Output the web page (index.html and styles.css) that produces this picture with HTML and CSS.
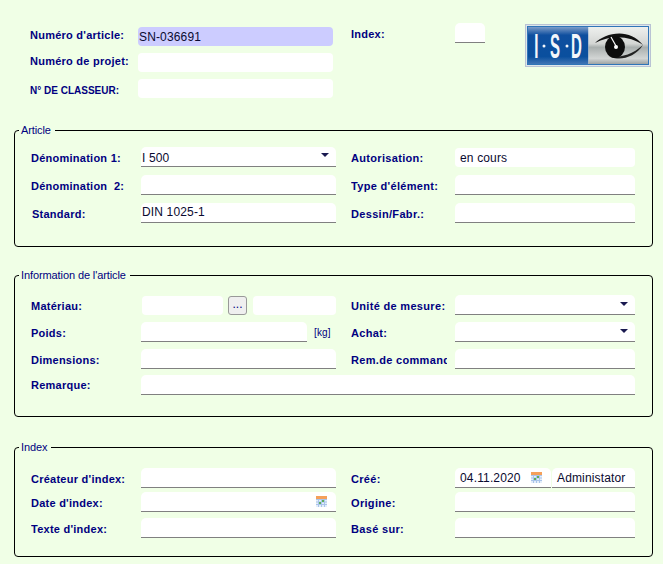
FILE: index.html
```html
<!DOCTYPE html>
<html lang="fr">
<head>
<meta charset="utf-8">
<title>Article</title>
<link rel="stylesheet" href="styles.css">
</head>
<body>
<div class="page">
  <header class="head">
    <div class="head-main">
      <div class="head-row"><span class="label label-top">Numéro d'article:</span><span class="field field-top field-key">SN-036691</span></div>
      <div class="head-row"><span class="label label-top">Numéro de projet:</span><span class="field field-top"></span></div>
      <div class="head-row"><span class="label label-caps">N° DE CLASSEUR:</span><span class="field field-top"></span></div>
    </div>
    <div class="head-index">
      <span class="label label-index">Index:</span>
      <span class="field field-index"></span>
    </div>
    <svg class="logo" width="126" height="43" viewBox="0 0 126 43">
      <defs>
        <linearGradient id="blue" x1="0" y1="0" x2="0" y2="1">
          <stop offset="0" stop-color="#7d9cc8"/><stop offset=".22" stop-color="#0f4f9f"/><stop offset=".8" stop-color="#0a4f9e"/><stop offset="1" stop-color="#3f74b4"/>
        </linearGradient>
        <linearGradient id="grey" x1="0" y1="0" x2="0" y2="1">
          <stop offset="0" stop-color="#eef0ee"/><stop offset=".45" stop-color="#d4d6d4"/><stop offset=".55" stop-color="#a9afae"/><stop offset=".85" stop-color="#d2d5d4"/><stop offset="1" stop-color="#9da3a3"/>
        </linearGradient>
      </defs>
      <rect x=".5" y=".5" width="125" height="42" fill="#dfe6ea" stroke="#b9c3d4"/>
      <rect x="2.500" y="2.500" width="121" height="38" fill="#fff" stroke="#2f75b8"/>
      <rect x="3" y="3" width="60.500" height="37" fill="url(#blue)"/>
      <rect x="63.500" y="3" width="59.500" height="37" fill="url(#grey)"/>
      <g transform="scale(.43 1)">
        <text class="logo-text" x="26.700" y="34">I</text>
        <text class="logo-text" x="69.800" y="34">S</text>
        <text class="logo-text" x="119.800" y="34">D</text>
      </g>
      <circle cx="19" cy="22" r="1.500" fill="#f4f6fa"/>
      <circle cx="42" cy="22" r="1.500" fill="#f4f6fa"/>
      <path d="M70 19 C80 9 104 3 118 21 C106 12 86 10 70 19Z" fill="#111"/>
      <path d="M86 33 C96 37 110 33 118 21 C108 30 98 33 86 33Z" fill="#222"/>
      <ellipse cx="90" cy="23" rx="10" ry="11" fill="#0d0d0d"/>
      <path d="M86 13 L91 22" stroke="#fff" stroke-width="1.200"/>
      <circle cx="91" cy="23" r="2" fill="#fff"/>
    </svg>
  </header>

  <fieldset class="group group-article">
    <legend class="legend">Article</legend>
    <div class="row">
      <span class="label">Dénomination 1:</span>
      <span class="field field-left field-line field-low">I 500<i class="arrow"></i></span>
      <span class="label label-right">Autorisation:</span>
      <span class="field field-right field-low">en cours</span>
    </div>
    <div class="row">
      <span class="label">Dénomination&nbsp; 2:</span>
      <span class="field field-left field-line"></span>
      <span class="label label-right">Type d'élément:</span>
      <span class="field field-right field-line"></span>
    </div>
    <div class="row">
      <span class="label label-indent">Standard:</span>
      <span class="field field-left field-line field-high">DIN 1025-1</span>
      <span class="label label-right">Dessin/Fabr.:</span>
      <span class="field field-right field-line"></span>
    </div>
  </fieldset>

  <fieldset class="group group-info">
    <legend class="legend">Information de l'article</legend>
    <div class="row row-tight">
      <span class="label">Matériau:</span>
      <span class="left-set">
        <span class="field field-mat"></span>
        <button class="dots" type="button">...</button>
        <span class="field field-mat2"></span>
      </span>
      <span class="label label-right">Unité de mesure:</span>
      <span class="field field-right field-line"><i class="arrow arrow-low"></i></span>
    </div>
    <div class="row row-tight">
      <span class="label">Poids:</span>
      <span class="left-set">
        <span class="field field-weight field-line"></span>
        <span class="unit">[kg]</span>
      </span>
      <span class="label label-right">Achat:</span>
      <span class="field field-right field-line"><i class="arrow arrow-low"></i></span>
    </div>
    <div class="row row-close">
      <span class="label">Dimensions:</span>
      <span class="field field-left field-line"></span>
      <span class="label label-right">Rem.de commande:</span>
      <span class="field field-right field-line"></span>
    </div>
    <div class="row row-tight">
      <span class="label label-flush">Remarque:</span>
      <span class="field field-wide field-line"></span>
    </div>
  </fieldset>

  <fieldset class="group group-index">
    <legend class="legend">Index</legend>
    <div class="row row-first">
      <span class="label">Créateur d'index:</span>
      <span class="field field-left field-line"></span>
      <span class="label label-right">Créé:</span>
      <span class="right-set">
        <span class="field field-date field-line">04.11.2020
          <svg class="cal" width="11" height="11" viewBox="0 0 11 11"><rect width="11" height="11" fill="#e4eefa"/><rect width="11" height="3" fill="#f5a05a"/><path d="M0 3.500h11M0 6h11M0 8.500h11M2.500 3v8M5.500 3v8M8.500 3v8" stroke="#a9c4ea" stroke-width="1" fill="none"/><path d="M3 6h2v2H3z" fill="#5fae5a"/><path d="M6 4h2v2H6z" fill="#5fae5a"/></svg>
        </span>
        <span class="field field-user field-line">Administator</span>
      </span>
    </div>
    <div class="row row-index">
      <span class="label">Date d'index:</span>
      <span class="field field-left field-line">
        <svg class="cal" width="11" height="11" viewBox="0 0 11 11"><rect width="11" height="11" fill="#e4eefa"/><rect width="11" height="3" fill="#f5a05a"/><path d="M0 3.500h11M0 6h11M0 8.500h11M2.500 3v8M5.500 3v8M8.500 3v8" stroke="#a9c4ea" stroke-width="1" fill="none"/><path d="M3 6h2v2H3z" fill="#5fae5a"/><path d="M6 4h2v2H6z" fill="#5fae5a"/></svg>
      </span>
      <span class="label label-right">Origine:</span>
      <span class="field field-right field-line"></span>
    </div>
    <div class="row row-index">
      <span class="label">Texte d'index:</span>
      <span class="field field-left field-line"></span>
      <span class="label label-right">Basé sur:</span>
      <span class="field field-right field-line"></span>
    </div>
  </fieldset>
</div>
</body>
</html>
```
FILE: styles.css
```css
html, body {
  margin: 0;
  padding: 0;
  height: 564px;
  overflow: hidden;
  background: #f0ffe6;
}
.page {
  font-family: "Liberation Sans", Arial, sans-serif;
  font-size: 12px;
  letter-spacing: .15px;
  color: #0a0a30;
  padding: 0 10px 0 14px;
}
.head {
  display: flex;
  align-items: flex-start;
  height: 124px;
  padding-left: 16px;
  padding-top: 23px;
  box-sizing: border-box;
}
.head-main {
  display: flex;
  flex-direction: column;
  gap: 7px;
  width: 303px;
  padding-top: 4px;
}
.head-row {
  display: flex;
  align-items: center;
  height: 19px;
}
.label {
  flex: none;
  width: 110px;
  margin-top: 2px;
  font-size: 11px;
  font-weight: bold;
  letter-spacing: .25px;
  color: #000080;
  white-space: nowrap;
  overflow: hidden;
}
.label-top {
  width: 108px;
  margin-top: -4px;
}
.label-caps {
  width: 108px;
  margin-top: 4px;
  font-size: 10px;
  letter-spacing: 0;
}
.label-indent {
  width: 109px;
  margin-left: 1px;
}
.label-flush { margin-top: 0; }
.label-right {
  width: 96px;
  margin-left: 15px;
  margin-right: 8px;
  letter-spacing: .32px;
}
.field {
  flex: none;
  display: flex;
  align-items: center;
  position: relative;
  box-sizing: border-box;
  height: 19px;
  background: #fff;
  border-radius: 4px;
  padding-left: 1px;
  white-space: nowrap;
}
.field-top { width: 195px; }
.field-key { background: #ccccff; }
.field-line {
  border-bottom: 1px solid #808080;
  border-radius: 5px 5px 0 0;
  height: 20px;
}
.field-low { padding-top: 2px; }
.field-high { padding-bottom: 2px; }
.head-index {
  display: flex;
  align-items: flex-start;
  width: 192px;
}
.label-index {
  width: 104px;
  margin: 5px 0 0 18px;
}
.field-index {
  width: 30px;
  height: 20px;
  border-bottom: 1px solid #808080;
  border-radius: 5px 5px 0 0;
}
.logo {
  flex: none;
  margin: 1px 0 0 0;
}
.logo-text {
  font-family: "Liberation Sans", Arial, sans-serif;
  font-size: 35px;
  font-weight: bold;
  text-anchor: middle;
  fill: #f4f6fa;
}
.group {
  margin: 0;
  padding: 0 17px 0 16px;
  width: 639px;
  box-sizing: border-box;
  border: 1px solid #000;
  border-radius: 4px;
  min-width: 0;
}
.legend {
  margin-left: -12px;
  padding: 0 4px 0 2px;
  font-size: 11px;
  line-height: 12px;
  letter-spacing: -.1px;
  color: #000080;
}
.group-article { height: 123px; padding-top: 11px; }
.group-info { height: 148px; margin-top: 22px; padding-top: 14px; }
.group-index { height: 116px; margin-top: 24px; padding-top: 15px; }
.row {
  display: flex;
  align-items: center;
  height: 20px;
  margin-bottom: 8px;
}
.row-tight { margin-bottom: 7px; }
.row-close { margin-bottom: 6px; }
.row-first { margin-bottom: 4px; }
.row-index { margin-bottom: 6px; }
.field-left { width: 195px; }
.field-right { width: 180px; padding-left: 5px; }
.field-wide { width: 494px; }
.arrow {
  position: absolute;
  right: 7px;
  top: 6px;
  width: 0;
  height: 0;
  border-left: 4px solid transparent;
  border-right: 4px solid transparent;
  border-top: 4px solid #1a1a50;
}
.arrow-low { top: 7px; }
.left-set {
  flex: none;
  display: flex;
  align-items: center;
  width: 195px;
}
.field-mat { width: 81px; margin-left: 1px; }
.dots {
  flex: none;
  width: 19px;
  height: 19px;
  margin: 0 6px 0 5px;
  padding: 0 0 3px;
  box-sizing: border-box;
  background: #efefef;
  border: 1px solid #999;
  border-radius: 3px;
  font: 12px "Liberation Sans", Arial, sans-serif;
  color: #000080;
}
.field-mat2 { width: 83px; }
.field-weight { width: 166px; }
.unit {
  margin-left: 7px;
  font-size: 10px;
  color: #000080;
}
.right-set {
  flex: none;
  display: flex;
  gap: 1px;
  width: 180px;
}
.field-date { width: 96px; padding-left: 5px; }
.field-user { width: 83px; padding-left: 5px; }
.cal {
  position: absolute;
  right: 9px;
  top: 4px;
}
```
